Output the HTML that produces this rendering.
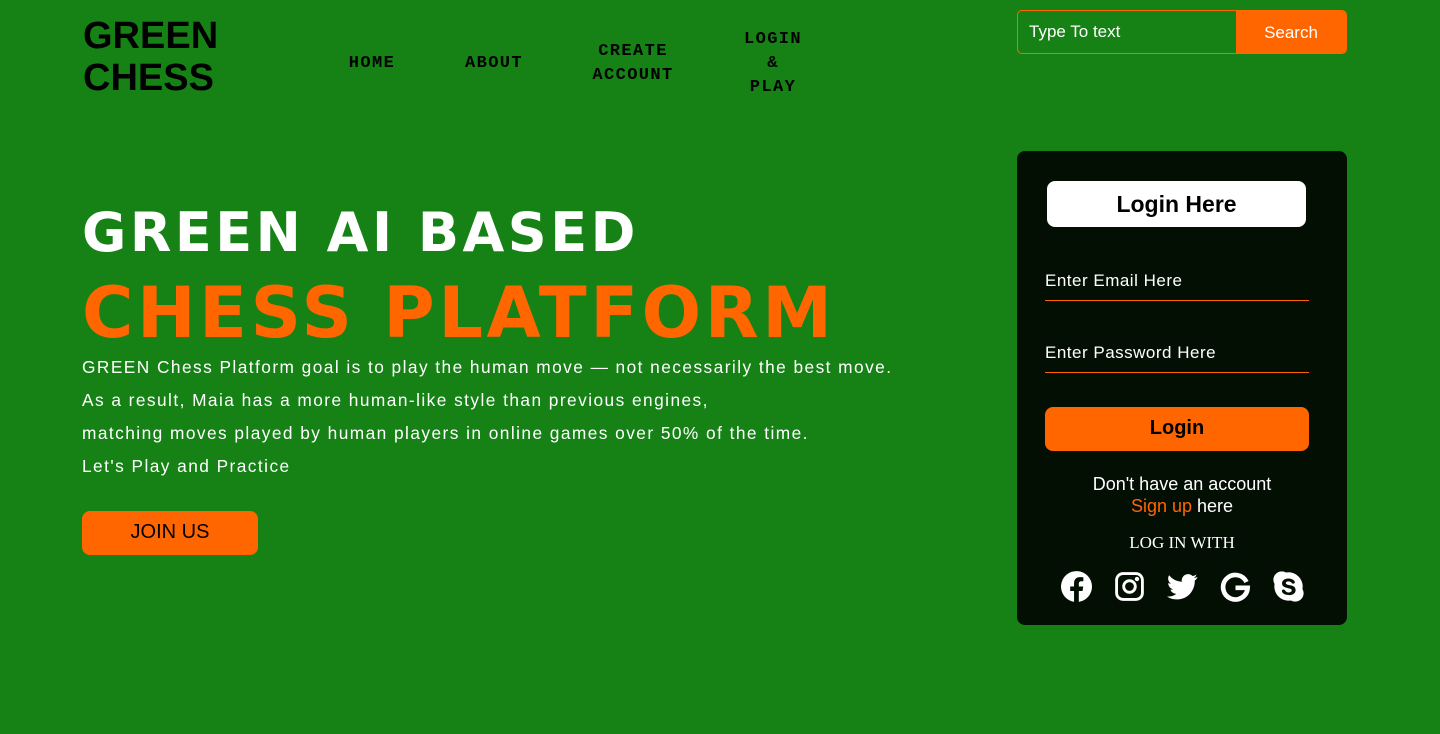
<!DOCTYPE html>
<html><head><meta charset="utf-8"><style>
*{margin:0;padding:0;box-sizing:border-box}
body{width:1440px;height:734px;background:#168216;font-family:"Liberation Sans",sans-serif;position:relative;overflow:hidden}
.logo{position:absolute;left:83px;top:15px;font-size:38px;font-weight:bold;line-height:42px;color:#000;transform:scaleX(1.0);transform-origin:left}
.nav{position:absolute;font-family:"Courier New","Liberation Mono",monospace;font-weight:bold;font-size:17px;letter-spacing:1.4px;color:#000;text-align:center;line-height:24px;transform:translateX(-50%)}
.search{position:absolute;left:1017px;top:10px;width:330px;height:44px;border:1px solid #ff6600;border-radius:5px;overflow:hidden}
.search .in{position:absolute;left:11px;top:11px;color:#fff;font-size:17px}
.search .bt{position:absolute;right:0;top:0;width:110px;height:44px;background:#ff6600;color:#fff;font-size:17px;text-align:center;line-height:43px}
h1{position:absolute;left:82px;top:201px;font-family:"DejaVu Sans",sans-serif;font-size:54px;font-weight:bold;color:#fff;letter-spacing:3.5px;line-height:64px}
h2{position:absolute;left:82px;top:275px;font-family:"DejaVu Sans",sans-serif;font-size:70px;font-weight:bold;color:#ff6600;letter-spacing:3.6px;line-height:76px}
.p{position:absolute;left:82px;top:351px;color:#fff;font-size:17.3px;letter-spacing:1.45px;line-height:33px}
.join{position:absolute;left:82px;top:511px;width:176px;height:44px;background:#ff6600;border-radius:8px;text-align:center;line-height:43px;font-size:20px;color:#000}
.panel{position:absolute;left:1017px;top:151px;width:330px;height:474px;background:#040f04;border-radius:8px}
.lh{position:absolute;left:30px;top:30px;width:259px;height:46px;background:#fff;border-radius:8px;text-align:center;line-height:46px;font-weight:bold;font-size:23px;color:#000}
.fld{position:absolute;left:28px;width:264px;border-bottom:1px solid #ff6600;color:#fff;font-size:17px;letter-spacing:.5px;padding-bottom:9px}
.lb{position:absolute;left:28px;top:256px;width:264px;height:44px;background:#ff6600;border-radius:8px;text-align:center;line-height:43px;font-weight:bold;font-size:20px;color:#000}
.acc{position:absolute;left:0;width:330px;top:322px;text-align:center;color:#fff;font-size:18px;line-height:22px}
.with{position:absolute;left:0;width:330px;top:382px;text-align:center;color:#fff;font-family:"Liberation Serif",serif;font-size:17px}
.icons{position:absolute;left:44px;top:420px;display:flex;gap:22px}
.icons svg{width:31px;height:31px}
</style></head><body>
<div class="logo">GREEN<br>CHESS</div>
<div class="nav" style="left:372px;top:52px">HOME</div>
<div class="nav" style="left:494px;top:52px">ABOUT</div>
<div class="nav" style="left:633px;top:40px">CREATE<br>ACCOUNT</div>
<div class="nav" style="left:773px;top:28px">LOGIN<br>&amp;<br>PLAY</div>
<div class="search"><span class="in">Type To text</span><div class="bt">Search</div></div>
<h1>GREEN AI BASED</h1>
<h2>CHESS PLATFORM</h2>
<div class="p">GREEN Chess Platform goal is to play the human move — not necessarily the best move.<br>As a result, Maia has a more human-like style than previous engines,<br>matching moves played by human players in online games over 50% of the time.<br>Let's Play and Practice</div>
<div class="join">JOIN US</div>
<div class="panel">
<div class="lh">Login Here</div>
<div class="fld" style="top:120px">Enter Email Here</div>
<div class="fld" style="top:192px">Enter Password Here</div>
<div class="lb">Login</div>
<div class="acc">Don't have an account<br><span style="color:#ff6600">Sign up</span> here</div>
<div class="with">LOG IN WITH</div>
<div class="icons">
<svg viewBox="0 0 24 24"><path fill="#fff" d="M24 12a12 12 0 1 0-13.9 11.9v-8.4H7.1V12h3V9.4c0-3 1.8-4.7 4.5-4.7 1.3 0 2.7.2 2.7.2v3h-1.5c-1.5 0-2 .9-2 1.9V12h3.4l-.5 3.5h-2.9v8.4A12 12 0 0 0 24 12z"/></svg>
<svg viewBox="0 0 24 24" fill="none" stroke="#fff" stroke-width="2.2"><rect x="2" y="2" width="20" height="20" rx="5"/><circle cx="12" cy="12" r="4.5"/><circle cx="17.8" cy="6.2" r=".6" fill="#fff"/></svg>
<svg viewBox="0 0 24 24"><path fill="#fff" d="M23.6 4.6a9.7 9.7 0 0 1-2.8.8 4.9 4.9 0 0 0 2.1-2.7c-.9.6-2 1-3.1 1.2A4.9 4.9 0 0 0 11.5 8.4 13.9 13.9 0 0 1 1.6 3.3a4.9 4.9 0 0 0 1.5 6.6 4.9 4.9 0 0 1-2.2-.6v.1a4.9 4.9 0 0 0 3.9 4.8 4.9 4.9 0 0 1-2.2.1 4.9 4.9 0 0 0 4.6 3.4A9.9 9.9 0 0 1 0 19.7 13.9 13.9 0 0 0 7.5 22c9.1 0 14-7.5 14-14v-.6c1-.7 1.8-1.6 2.1-2.8z"/></svg>
<svg viewBox="0 0 24 24" fill="none" stroke="#fff" stroke-width="3.6"><path d="M20.5 8.5A9.5 9.5 0 1 0 21.4 13H12"/></svg>
<svg viewBox="0 0 24 24"><path fill="#fff" d="M22.8 13.9c.1-.6.2-1.2.2-1.9A11 11 0 0 0 12 1c-.6 0-1.3.1-1.9.2A6.5 6.5 0 0 0 1.2 10.1 11 11 0 0 0 13.9 22.8a6.5 6.5 0 0 0 8.9-8.9zM12.2 18.6c-3.6 0-5.3-1.8-5.3-3.1 0-.7.5-1.2 1.2-1.2 1.6 0 1.2 2.3 4.1 2.3 1.5 0 2.3-.8 2.3-1.6 0-.5-.2-1.1-1.2-1.3l-3.2-.8C7.5 12.2 7 10.8 7 9.6c0-2.7 2.6-3.8 5-3.8 2.3 0 4.9 1.3 4.9 2.9 0 .7-.6 1.1-1.3 1.1-1.3 0-1.1-1.8-3.7-1.8-1.3 0-2 .6-2 1.4s1 1.1 1.9 1.3l2.4.5c2.6.6 3.3 2.1 3.3 3.6 0 2.3-1.8 3.9-5.3 3.9z"/></svg>
</div>
</div>
</body></html>
